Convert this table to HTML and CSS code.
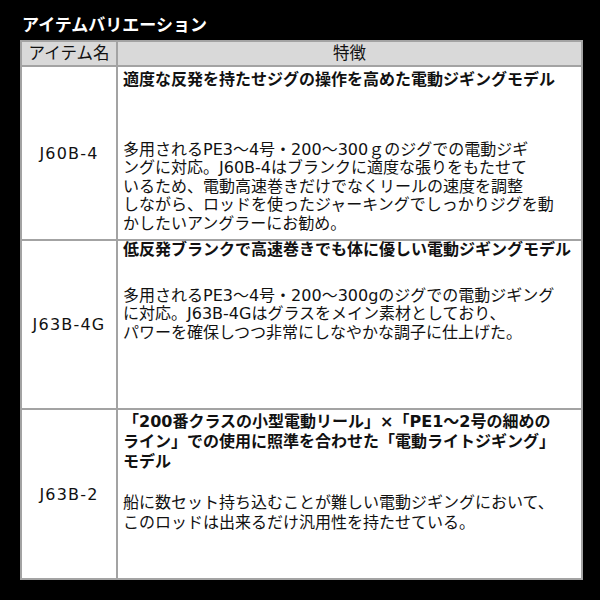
FILE: index.html
```html
<!DOCTYPE html>
<html lang="ja">
<head>
<meta charset="utf-8">
<link rel="stylesheet" href="styles.css">
</head>
<body>
<h1 class="title">アイテムバリエーション</h1>
<table class="items">
  <thead>
    <tr class="head-row">
      <th class="col-name">アイテム名</th>
      <th class="col-desc">特徴</th>
    </tr>
  </thead>
  <tbody>
    <tr class="row row-1">
      <td class="name">J60B-4</td>
      <td class="desc">
        <p class="lead">適度な反発を持たせジグの操作を高めた電動ジギングモデル</p>
        <p class="body">多用されるPE3～4号・200～300ｇのジグでの電動ジギ<br>ングに対応。J60B-4はブランクに適度な張りをもたせて<br>いるため、電動高速巻きだけでなくリールの速度を調整<br>しながら、ロッドを使ったジャーキングでしっかりジグを動<br>かしたいアングラーにお勧め。</p>
      </td>
    </tr>
    <tr class="row row-2">
      <td class="name">J63B-4G</td>
      <td class="desc">
        <p class="lead">低反発ブランクで高速巻きでも体に優しい電動ジギングモデル</p>
        <p class="body">多用されるPE3～4号・200～300gのジグでの電動ジギング<br>に対応。J63B-4Gはグラスをメイン素材としており、<br>パワーを確保しつつ非常にしなやかな調子に仕上げた。</p>
      </td>
    </tr>
    <tr class="row row-3">
      <td class="name">J63B-2</td>
      <td class="desc">
        <p class="lead">「200番クラスの小型電動リール」×「PE1～2号の細めの<br>ライン」での使用に照準を合わせた「電動ライトジギング」<br>モデル</p>
        <p class="body">船に数セット持ち込むことが難しい電動ジギングにおいて、<br>このロッドは出来るだけ汎用性を持たせている。</p>
      </td>
    </tr>
  </tbody>
</table>
</body>
</html>
```
FILE: styles.css
```css
html, body {
  margin: 0;
  padding: 0;
  background: #000;
}
body {
  width: 600px;
  height: 600px;
  overflow: hidden;
  font-family: "DejaVu Sans", "Noto Sans CJK JP", sans-serif;
  color: #111;
}
.title {
  margin: 14px 0 0 22px;
  font-size: 17px;
  line-height: 20px;
  font-weight: 700;
  color: #fff;
  font-family: "Noto Sans CJK JP", sans-serif;
}
.items {
  margin: 6px 0 0 20px;
  width: 563px;
  border-collapse: collapse;
  background: #fff;
  table-layout: fixed;
}
.items th, .items td {
  border: 2px solid #a3a3a3;
  padding: 0;
}
.head-row th {
  background: #d9d9d9;
  height: 23px;
  font-weight: 400;
  font-size: 16.5px;
  line-height: 20px;
  text-align: center;
  vertical-align: middle;
}
.col-name { width: 94px; }
.name {
  text-align: center;
  vertical-align: middle;
  font-size: 16px;
  letter-spacing: 1.2px;
}
.desc {
  vertical-align: top;
  padding: 4px 0 0 5px !important;
  font-size: 16px;
  white-space: nowrap;
}
.desc p { margin: 0; }
.lead { font-weight: 700; }
.row-1 { height: 174px; }
.row-2 { height: 169px; }
.row-3 { height: 170px; }
.row-1 .desc, .row-2 .desc { line-height: 18.5px; }
.row-3 .desc { line-height: 20px; }
.row-1 .desc { padding-top: 4px !important; }
.row-2 .desc { padding-top: 0 !important; }
.row-3 .desc { padding-top: 2px !important; }
.row-1 .body { margin-top: 51px; }
.row-2 .body { margin-top: 27px; }
.row-3 .body { margin-top: 21px; }
```
